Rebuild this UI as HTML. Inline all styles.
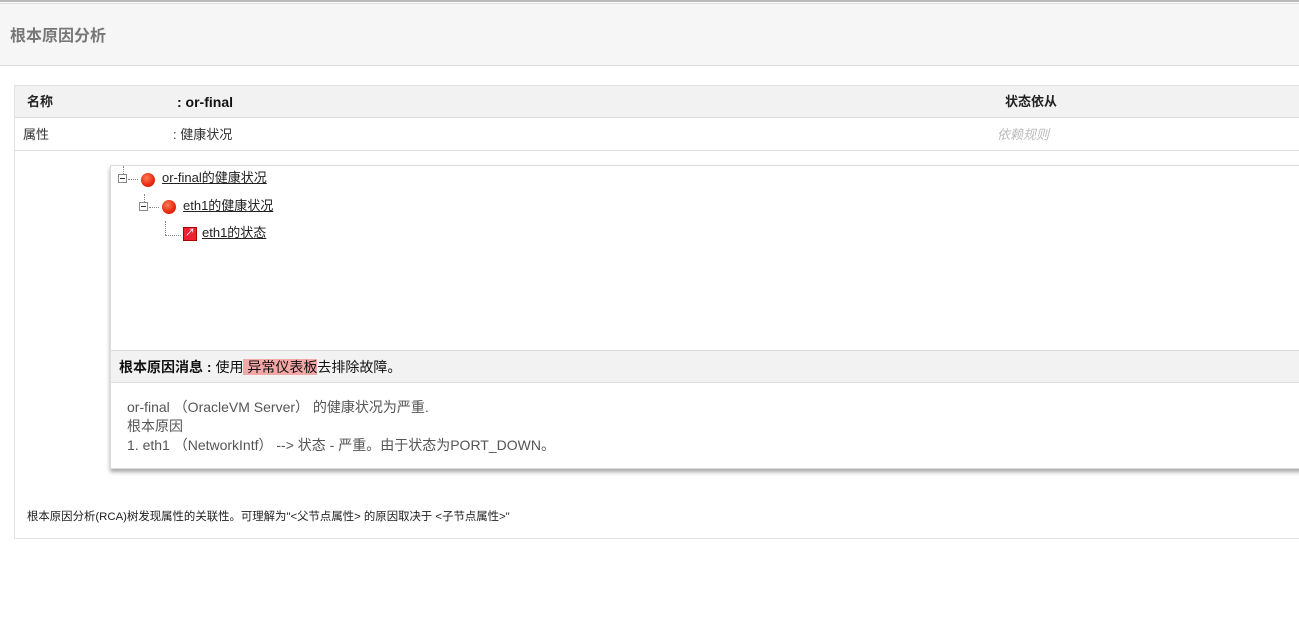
<!DOCTYPE html>
<html><head><meta charset="utf-8"><style>
*{margin:0;padding:0;box-sizing:border-box}
body{width:1299px;height:624px;background:#fff;font-family:"Liberation Sans","Noto Sans CJK SC",sans-serif;font-size:13px;color:#333;position:relative;overflow:hidden}
.abs{position:absolute;line-height:16px}
a{color:#222;text-decoration:underline}
.dot{position:absolute;width:14px;height:14px;border-radius:50%;background:radial-gradient(circle at 40% 35%,#ff7a55,#e8260e 60%,#c81a05)}
.pm{position:absolute;width:9px;height:9px;border:1px solid #888;background:#fff}
.pm:after{content:"";position:absolute;left:1px;top:3px;width:5px;height:1px;background:#333}
</style></head><body>
<div class="abs" style="left:0;top:0;width:1299px;height:2px;background:#bbb"></div>
<div class="abs" style="left:0;top:3px;width:1299px;height:1px;background:#ddd"></div>
<div class="abs" style="left:0;top:4px;width:1299px;height:62px;background:#f6f6f6;border-bottom:1px solid #ddd"></div>
<div class="abs" style="left:10px;top:27px;font-size:16px;line-height:20px;font-weight:bold;color:#777">根本原因分析</div>

<div class="abs" style="left:14px;top:85px;width:1290px;height:454px;border:1px solid #e3e3e3"></div>
<div class="abs" style="left:15px;top:86px;width:1290px;height:32px;background:#f2f2f2;border-bottom:1px solid #ddd"></div>
<div class="abs" style="left:27px;top:94px;font-weight:bold;color:#222">名称</div>
<div class="abs" style="left:177px;top:94px;font-weight:bold;font-size:14px;color:#111">: or-final</div>
<div class="abs" style="left:1005px;top:94px;font-weight:bold;color:#222">状态依从</div>
<div class="abs" style="left:23px;top:127px;color:#333">属性</div>
<div class="abs" style="left:173px;top:127px;color:#333">: 健康状况</div>
<div class="abs" style="left:997px;top:127px;color:#bbb;font-style:italic">依赖规则</div>
<div class="abs" style="left:15px;top:150px;width:1290px;height:1px;background:#ddd"></div>

<div class="abs" style="left:110px;top:165px;width:1195px;height:304px;border:1px solid #ddd;box-shadow:0 3px 4px rgba(0,0,0,.35);background:#fff"></div>
<div class="abs" style="left:123px;top:166px;height:8px;border-left:1px dotted #888"></div>
<div class="pm" style="left:118px;top:174px"></div>
<div class="abs" style="left:128px;top:179px;width:10px;border-top:1px dotted #888"></div>
<div class="dot" style="left:141px;top:173px"></div>
<a class="abs" style="left:162px;top:170px">or-final的健康状况</a>
<div class="abs" style="left:144px;top:194px;height:8px;border-left:1px dotted #888"></div>
<div class="pm" style="left:139px;top:202px"></div>
<div class="abs" style="left:149px;top:207px;width:10px;border-top:1px dotted #888"></div>
<div class="dot" style="left:162px;top:200px"></div>
<a class="abs" style="left:183px;top:198px">eth1的健康状况</a>
<div class="abs" style="left:165px;top:221px;height:14px;border-left:1px dotted #888"></div>
<div class="abs" style="left:165px;top:235px;width:16px;border-top:1px dotted #888"></div>
<div class="abs" style="left:183px;top:227px;width:14px;height:14px;background:#e23;border:1px solid #a00;color:#fff;font-size:10px;line-height:12px;text-align:center">↗</div>
<a class="abs" style="left:202px;top:225px">eth1的状态</a>

<div class="abs" style="left:111px;top:350px;width:1194px;height:33px;background:#f2f2f2;border-top:1px solid #ddd;border-bottom:1px solid #ddd"></div>
<div class="abs" style="left:119px;top:358px;font-size:14px;line-height:18px;color:#111"><b>根本原因消息 :</b> 使用<span style="background:#f4a7a7"> 异常仪表板</span>去排除故障。</div>
<div class="abs" style="left:127px;top:398px;font-size:14px;color:#555;line-height:19px">or-final （OracleVM Server） 的健康状况为严重.<br>根本原因<br>1. eth1 （NetworkIntf） --&gt; 状态 - 严重。由于状态为PORT_DOWN。</div>
<div class="abs" style="left:27px;top:509px;font-size:11.4px;color:#222">根本原因分析(RCA)树发现属性的关联性。可理解为"&lt;父节点属性&gt; 的原因取决于 &lt;子节点属性&gt;"</div>
</body></html>
